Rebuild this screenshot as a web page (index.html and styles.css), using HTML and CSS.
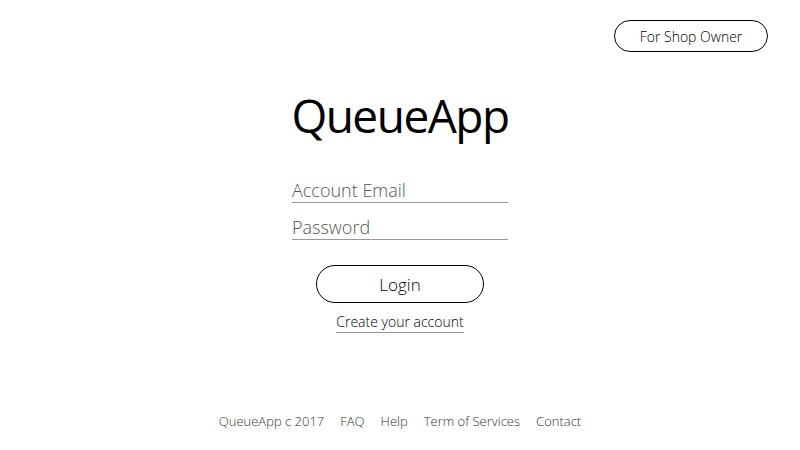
FILE: index.html
```html
<!DOCTYPE html>
<html>
<head>
<meta charset="utf-8">
<link rel="stylesheet" href="styles.css">
</head>
<body>
<div class="page">
  <header class="top">
    <a class="owner-btn" href="#">For Shop Owner</a>
  </header>
  <main class="login">
    <h1 class="brand">QueueApp</h1>
    <form class="form">
      <input class="field" type="email" placeholder="Account Email">
      <input class="field" type="password" placeholder="Password">
      <button class="login-btn" type="button">Login</button>
      <a class="create" href="#">Create your account</a>
    </form>
  </main>
  <footer class="footer">
    <span>QueueApp c 2017</span>
    <a href="#">FAQ</a>
    <a href="#">Help</a>
    <a href="#">Term of Services</a>
    <a href="#">Contact</a>
  </footer>
</div>
</body>
</html>
```
FILE: styles.css
```css
* { box-sizing: border-box; }
html, body { margin: 0; padding: 0; background: #fff; }
body { font-family: "Open Sans", "Noto Sans", sans-serif; color: #000; }
.page { width: 800px; height: 450px; display: flex; flex-direction: column; }
.top { display: flex; justify-content: flex-end; padding: 20px 32px 0 0; }
.owner-btn {
  display: flex; align-items: center; justify-content: center;
  width: 154px; height: 32px; border: 1px solid #000; border-radius: 16px;
  font-size: 14px; color: #000; text-decoration: none; font-weight: 300;
}
.login { display: flex; flex-direction: column; align-items: center; }
.brand { margin: 33px 0 0; font-size: 46px; font-weight: 500; line-height: 60px; letter-spacing: -1.5px; }
.form { display: flex; flex-direction: column; align-items: center; margin-top: 32px; }
.field {
  width: 216px; height: 26px; border: 0; border-bottom: 1px solid #999; padding: 0;
  font-family: inherit; font-size: 18px; font-weight: 300; outline: none; background: transparent;
  margin-bottom: 11px;
}
.field::placeholder { color: #555; }
.login-btn {
  margin-top: 14px; width: 168px; height: 38px; border: 1px solid #000; border-radius: 19px;
  background: #fff; font-family: inherit; font-size: 17px; font-weight: 300; color: #000; padding: 0;
}
.create {
  margin-top: 9px; font-size: 14px; font-weight: 300; color: #000; text-decoration: none;
  border-bottom: 1px solid #999; line-height: 20px;
}
.footer {
  margin-top: auto; margin-bottom: 20px; display: flex; justify-content: center; gap: 16px;
  font-size: 13px; font-weight: 300; color: #333;
}
.footer a { color: #333; text-decoration: none; }
```
